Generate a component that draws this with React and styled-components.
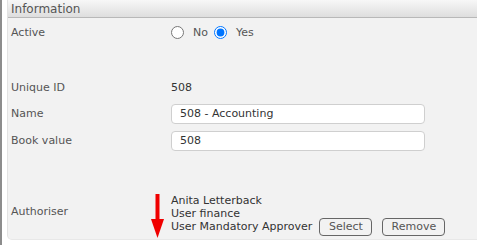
import React from 'react'
import styled, { createGlobalStyle } from 'styled-components'

const GlobalStyle = createGlobalStyle`
  html, body {
    margin: 0;
    padding: 0;
    background: #ffffff;
  }
  body {
    font-family: "DejaVu Sans", Verdana, sans-serif;
    font-size: 11px;
  }
`

function App() {
  return (
    <Page>
      <GlobalStyle />
      <Strip />
      <Panel>
        <Header>Information</Header>
        <Body>
          <Row $height={26} $top={1}>
            <Label>Active</Label>
            <Value>
              <Radio type="radio" name="active" />
              <RadioText>No</RadioText>
              <Radio type="radio" name="active" defaultChecked />
              <RadioText>Yes</RadioText>
            </Value>
          </Row>
          <Row $height={26} $top={29}>
            <Label>Unique ID</Label>
            <Value>508</Value>
          </Row>
          <Row $height={27}>
            <Label>Name</Label>
            <Value>
              <TextInput defaultValue="508 - Accounting" />
            </Value>
          </Row>
          <Row $height={27}>
            <Label>Book value</Label>
            <Value>
              <TextInput defaultValue="508" />
            </Value>
          </Row>
          <Row $height={46} $top={40} $align="start">
            <Label $offset={11}>Authoriser</Label>
            <Users>
              <span>Anita Letterback</span>
              <span>User finance</span>
              <UserLine>
                <span>User Mandatory Approver</span>
                <Button $w={53}>Select</Button>
                <Button $w={63}>Remove</Button>
              </UserLine>
            </Users>
            <Arrow width="13" height="44" viewBox="0 0 13 44">
              <rect x="4.5" y="0" width="4" height="26" fill="#f00000" />
              <polygon points="0,25 13,25 6.5,44" fill="#f00000" />
            </Arrow>
          </Row>
        </Body>
      </Panel>
    </Page>
  )
}

export default App

const Page = styled.div`
display: flex;
width: 477px;
height: 245px;
overflow: hidden;
background: #fff;
`

const Strip = styled.div`
width: 2px;
margin-right: 5px;
background: #8c8c8c;
flex-shrink: 0;
`

const Panel = styled.div`
flex: 1;
height: 240px;
background: #f2f2f2;
border-left: 1px solid #e2e2e2;
border-bottom: 1px solid #e8e8e8;
border-bottom-left-radius: 5px;
box-sizing: border-box;
display: flex;
flex-direction: column;
`

const Header = styled.div`
height: 18px;
box-sizing: border-box;
padding: 2px 0 0 3px;
background: linear-gradient(#f7f7f7, #dedede);
border-bottom: 1px solid #b8b8b8;
color: #555;
font-size: 12px;
line-height: 15px;
`

const Body = styled.div`
padding: 0 0 0 3px;
display: flex;
flex-direction: column;
`

const Row = styled.div`
position: relative;
display: grid;
grid-template-columns: 160px 1fr;
align-items: ${p => p.$align || 'center'};
height: ${p => p.$height}px;
margin-top: ${p => p.$top || 0}px;
`

const Label = styled.div`
color: #555;
margin-top: ${p => p.$offset || 0}px;
`

const Value = styled.div`
display: flex;
align-items: center;
color: #333;
`

const Radio = styled.input`
width: 13px;
height: 13px;
margin: 0 9px 0 0;
`

const RadioText = styled.span`
color: #555;
margin-right: 6px;
`

const TextInput = styled.input`
width: 254px;
height: 20px;
box-sizing: border-box;
border: 1px solid #cfcfcf;
border-radius: 4px;
background: #fff;
padding: 0 8px;
font-family: inherit;
font-size: 11px;
color: #333;
outline: none;
`

const Users = styled.div`
display: flex;
flex-direction: column;
color: #333;
line-height: 13px;
`

const UserLine = styled.div`
display: flex;
align-items: center;
height: 13px;
`

const Button = styled.button`
flex-shrink: 0;
width: ${p => p.$w}px;
height: 18px;
margin-left: 7px;
& + & {
  margin-left: 10px;
}
padding: 0;
border: 1px solid #666;
border-radius: 4px;
background: #f2f2f2;
color: #555;
font-family: inherit;
font-size: 11px;
`

const Arrow = styled.svg`
position: absolute;
left: 140px;
top: 0;
`
